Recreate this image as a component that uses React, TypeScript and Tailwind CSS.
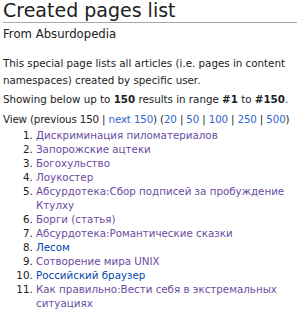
import React from 'react';

const items: { title: string; visited: boolean }[] = [
  { title: 'Дискриминация пиломатериалов', visited: true },
  { title: 'Запорожские ацтеки', visited: true },
  { title: 'Богохульство', visited: true },
  { title: 'Лоукостер', visited: true },
  { title: 'Абсурдотека:Сбор подписей за пробуждение Ктулху', visited: true },
  { title: 'Борги (статья)', visited: true },
  { title: 'Абсурдотека:Романтические сказки', visited: true },
  { title: 'Лесом', visited: false },
  { title: 'Сотворение мира UNIX', visited: true },
  { title: 'Российский браузер', visited: false },
  { title: 'Как правильно:Вести себя в экстремальных ситуациях', visited: true },
];

const sizes = ['20', '50', '100', '250', '500'];

const App: React.FC = () => {
  return (
    <div className="w-[300px] h-[310px] overflow-hidden bg-white text-[#202122] font-['DejaVu_Sans',sans-serif]">
      <h1 className="mx-[3px] pt-[0px] pb-[1px] text-[19px] leading-[21px] border-b border-[#a2a9b1]">
        Created pages list
      </h1>
      <div className="px-[3px] pt-[4px] text-[11.7px] leading-[14px]">From Absurdopedia</div>
      <div className="px-[3px] pt-[14px] text-[10.3px] leading-[16.5px]">
        <p>This special page lists all articles (i.e. pages in content namespaces) created by specific user.</p>
        <p className="mt-[3px]">
          Showing below up to <b>150</b> results in range <b>#1</b> to <b>#150</b>.
        </p>
        <p className="mt-[3px] whitespace-nowrap tracking-[-0.15px]">
          View (previous 150 | <a className="text-[#3366cc]">next 150</a>) (
          {sizes.map((s, i) => (
            <React.Fragment key={s}>
              {i > 0 && ' | '}
              <a className="text-[#3366cc]">{s}</a>
            </React.Fragment>
          ))}
          )
        </p>
        <ol className="list-decimal pl-[33px] mt-[1px] leading-[14px]">
          {items.map((it) => (
            <li key={it.title}>
              <a className={it.visited ? 'text-[#6b4ba1]' : 'text-[#0645ad]'}>{it.title}</a>
            </li>
          ))}
        </ol>
      </div>
    </div>
  );
};

export default App;
